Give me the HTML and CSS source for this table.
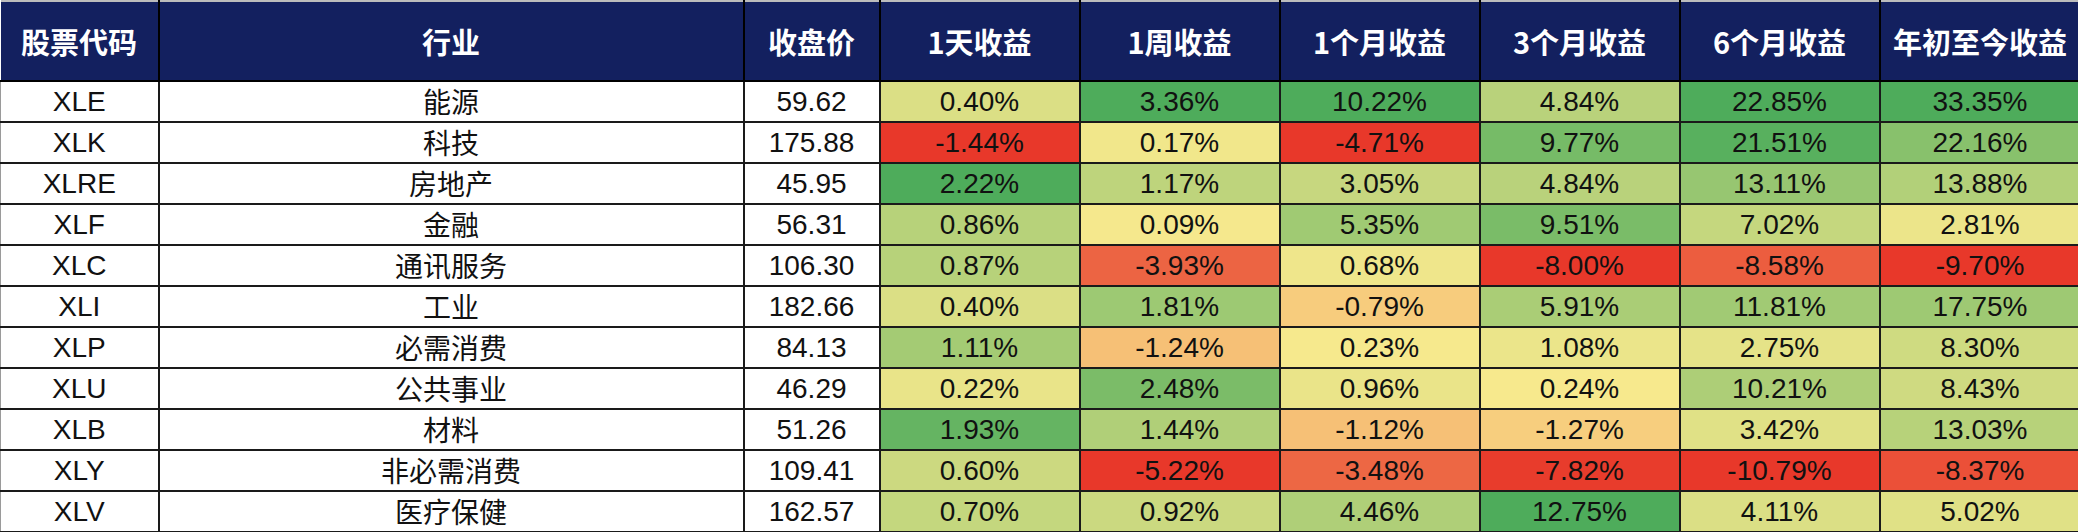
FILE: index.html
```html
<!DOCTYPE html>
<html lang="zh-CN">
<head>
<meta charset="utf-8">
<title>行业ETF收益</title>
<link rel="stylesheet" href="styles.css">
</head>
<body>
<table class="grid">
  <colgroup>
    <col class="w-code"><col class="w-ind"><col class="w-px">
    <col class="w-r"><col class="w-r"><col class="w-r"><col class="w-r"><col class="w-r"><col class="w-r">
  </colgroup>
  <thead>
    <tr>
      <th>股票代码</th><th>行业</th><th>收盘价</th><th>1天收益</th><th>1周收益</th><th>1个月收益</th><th>3个月收益</th><th>6个月收益</th><th>年初至今收益</th>
    </tr>
  </thead>
  <tbody>
    <tr><td>XLE</td><td class="cn">能源</td><td>59.62</td>
      <td style="background:rgb(219,223,133)">0.40%</td><td style="background:rgb(78,172,91)">3.36%</td><td style="background:rgb(78,172,91)">10.22%</td><td style="background:rgb(185,210,123)">4.84%</td><td style="background:rgb(78,172,91)">22.85%</td><td style="background:rgb(78,172,91)">33.35%</td></tr>
    <tr><td>XLK</td><td class="cn">科技</td><td>175.88</td>
      <td style="background:rgb(232,56,42)">-1.44%</td><td style="background:rgb(241,231,139)">0.17%</td><td style="background:rgb(232,56,42)">-4.71%</td><td style="background:rgb(118,187,103)">9.77%</td><td style="background:rgb(88,176,94)">21.51%</td><td style="background:rgb(136,193,108)">22.16%</td></tr>
    <tr><td>XLRE</td><td class="cn">房地产</td><td>45.95</td>
      <td style="background:rgb(78,172,91)">2.22%</td><td style="background:rgb(190,212,124)">1.17%</td><td style="background:rgb(199,215,127)">3.05%</td><td style="background:rgb(185,210,123)">4.84%</td><td style="background:rgb(151,198,113)">13.11%</td><td style="background:rgb(178,208,121)">13.88%</td></tr>
    <tr><td>XLF</td><td class="cn">金融</td><td>56.31</td>
      <td style="background:rgb(183,210,122)">0.86%</td><td style="background:rgb(245,232,141)">0.09%</td><td style="background:rgb(160,202,115)">5.35%</td><td style="background:rgb(122,188,104)">9.51%</td><td style="background:rgb(197,215,126)">7.02%</td><td style="background:rgb(236,229,138)">2.81%</td></tr>
    <tr><td>XLC</td><td class="cn">通讯服务</td><td>106.30</td>
      <td style="background:rgb(183,210,122)">0.87%</td><td style="background:rgb(236,100,67)">-3.93%</td><td style="background:rgb(239,230,139)">0.68%</td><td style="background:rgb(232,56,42)">-8.00%</td><td style="background:rgb(236,93,63)">-8.58%</td><td style="background:rgb(232,56,42)">-9.70%</td></tr>
    <tr><td>XLI</td><td class="cn">工业</td><td>182.66</td>
      <td style="background:rgb(219,223,133)">0.40%</td><td style="background:rgb(157,201,115)">1.81%</td><td style="background:rgb(247,204,125)">-0.79%</td><td style="background:rgb(170,205,118)">5.91%</td><td style="background:rgb(161,202,116)">11.81%</td><td style="background:rgb(158,201,115)">17.75%</td></tr>
    <tr><td>XLP</td><td class="cn">必需消费</td><td>84.13</td>
      <td style="background:rgb(164,203,116)">1.11%</td><td style="background:rgb(246,192,118)">-1.24%</td><td style="background:rgb(246,233,141)">0.23%</td><td style="background:rgb(235,229,138)">1.08%</td><td style="background:rgb(229,227,136)">2.75%</td><td style="background:rgb(207,219,129)">8.30%</td></tr>
    <tr><td>XLU</td><td class="cn">公共事业</td><td>46.29</td>
      <td style="background:rgb(233,228,137)">0.22%</td><td style="background:rgb(123,188,104)">2.48%</td><td style="background:rgb(234,228,137)">0.96%</td><td style="background:rgb(247,233,141)">0.24%</td><td style="background:rgb(173,206,119)">10.21%</td><td style="background:rgb(207,218,129)">8.43%</td></tr>
    <tr><td>XLB</td><td class="cn">材料</td><td>51.26</td>
      <td style="background:rgb(101,180,98)">1.93%</td><td style="background:rgb(176,207,120)">1.44%</td><td style="background:rgb(246,192,118)">-1.12%</td><td style="background:rgb(247,206,126)">-1.27%</td><td style="background:rgb(224,225,134)">3.42%</td><td style="background:rgb(183,210,122)">13.03%</td></tr>
    <tr><td>XLY</td><td class="cn">非必需消费</td><td>109.41</td>
      <td style="background:rgb(204,217,128)">0.60%</td><td style="background:rgb(232,56,42)">-5.22%</td><td style="background:rgb(237,103,68)">-3.48%</td><td style="background:rgb(232,60,44)">-7.82%</td><td style="background:rgb(232,56,42)">-10.79%</td><td style="background:rgb(235,80,56)">-8.37%</td></tr>
    <tr><td>XLV</td><td class="cn">医疗保健</td><td>162.57</td>
      <td style="background:rgb(196,215,126)">0.70%</td><td style="background:rgb(203,217,128)">0.92%</td><td style="background:rgb(175,207,120)">4.46%</td><td style="background:rgb(78,172,91)">12.75%</td><td style="background:rgb(219,223,133)">4.11%</td><td style="background:rgb(224,225,134)">5.02%</td></tr>
  </tbody>
</table>
</body>
</html>
```
FILE: styles.css
```css
html, body {
  margin: 0;
  padding: 0;
  background: #ffffff;
}

.grid {
  border-collapse: collapse;
  table-layout: fixed;
  width: 2078px;
  font-family: "Liberation Sans", "Noto Sans CJK SC", sans-serif;
  color: #111111;
}

.w-code { width: 158px; }
.w-ind { width: 585px; }
.w-px { width: 136px; }
.w-r { width: 200px; }

.grid thead th {
  background: #13205f;
  color: #ffffff;
  font-family: "Noto Sans CJK SC", "Liberation Sans", sans-serif;
  font-weight: 700;
  font-size: 29px;
  height: 78px;
  padding: 0;
  text-align: center;
  vertical-align: middle;
  border-top: 2px solid #bcbcbc;
  border-bottom: 2px solid #000000;
  border-left: 2px solid #000000;
  border-right: 2px solid #000000;
  letter-spacing: 0;
  white-space: nowrap;
}

.grid thead th:first-child { border-left: none; }
.grid thead th:last-child { border-right: none; }

.grid tbody td {
  height: 39px;
  padding: 0;
  font-size: 28px;
  line-height: 39px;
  text-align: center;
  vertical-align: middle;
  border-bottom: 2px solid #1a1a1a;
  border-left: 2px solid #1a1a1a;
  border-right: 2px solid #1a1a1a;
  white-space: nowrap;
  overflow: hidden;
}

.grid tbody td:first-child { border-left: 1px solid #9a9a9a; }
.grid tbody td:last-child { border-right: none; }

.grid tbody td.cn {
  font-family: "Noto Sans CJK SC", sans-serif;
  font-size: 28px;
}
```
